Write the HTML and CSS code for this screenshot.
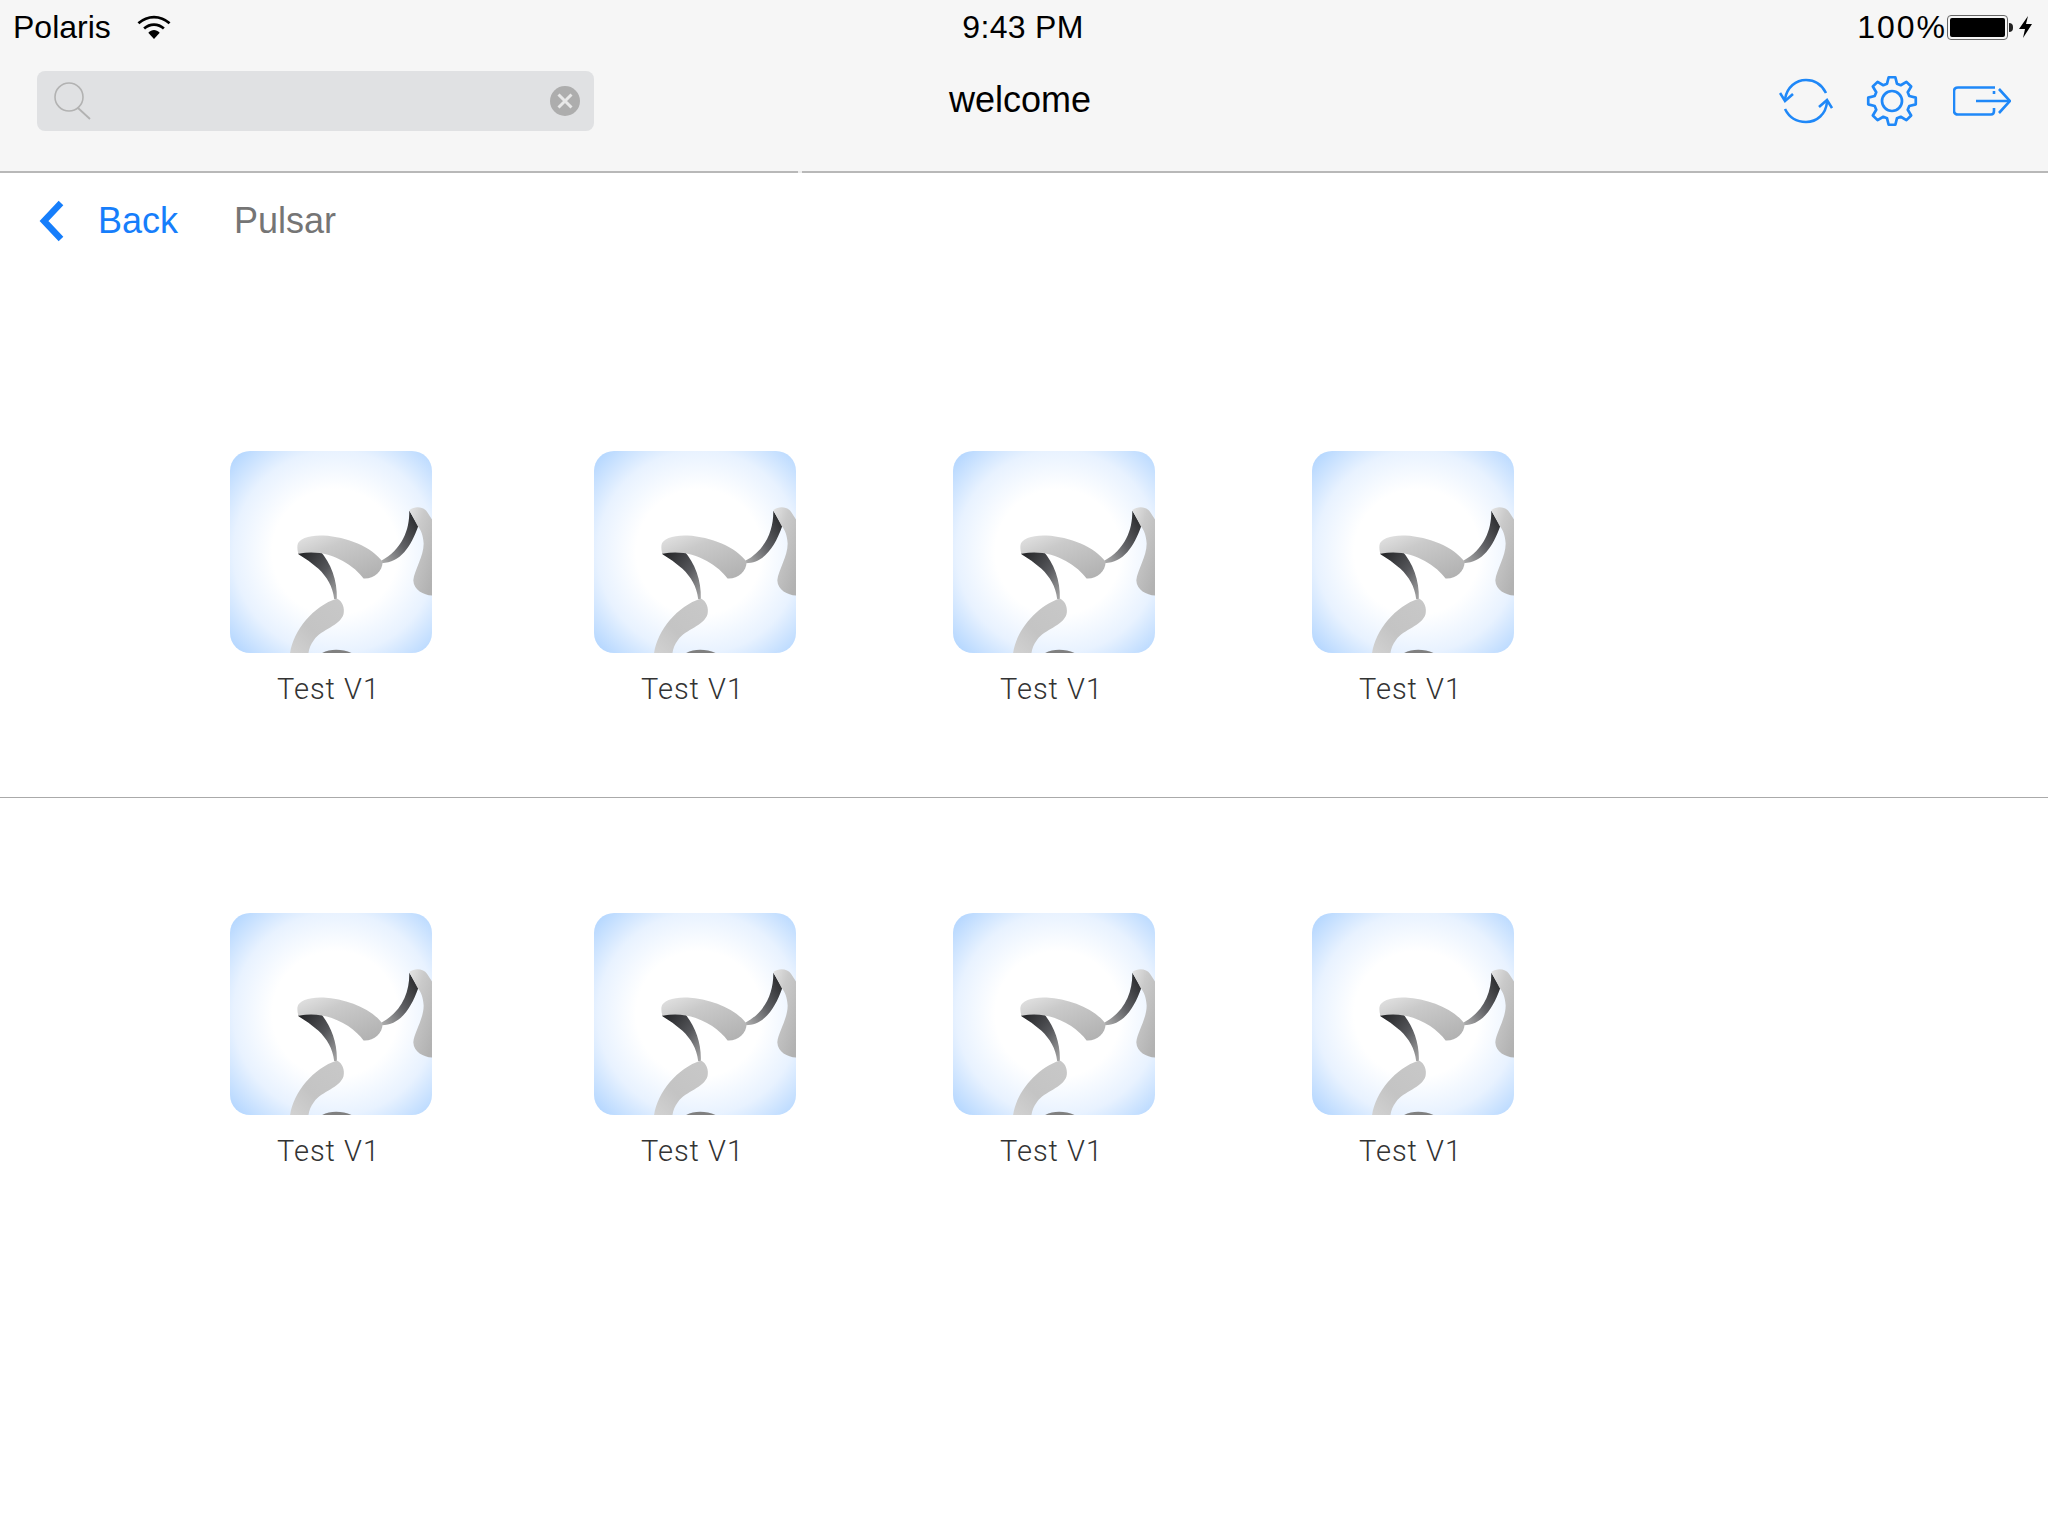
FILE: index.html
```html
<!DOCTYPE html>
<html lang="en">
<head>
    <meta charset="UTF-8">
    <meta name="viewport" content="width=device-width, initial-scale=1.0">
    <title>Pulsar</title>
    <link rel="stylesheet" href="styles.css">
</head>
<body>
    <svg class="defs" width="0" height="0">
        <defs>
            <radialGradient id="tileBg" cx="52%" cy="50%" r="74%">
                <stop offset="0" stop-color="#fff"/>
                <stop offset="0.42" stop-color="#fff"/>
                <stop offset="0.68" stop-color="#e8f2ff"/>
                <stop offset="1" stop-color="#a6cfff"/>
            </radialGradient>
            <linearGradient id="ribbonGrey" x1="0" y1="0" x2="0.8" y2="1">
                <stop offset="0" stop-color="#e4e4e4"/>
                <stop offset="0.35" stop-color="#cacaca"/>
                <stop offset="1" stop-color="#b2b2b2"/>
            </linearGradient>
            <linearGradient id="ribbonLow" x1="1" y1="0" x2="0" y2="1">
                <stop offset="0" stop-color="#c8c8c8"/>
                <stop offset="0.6" stop-color="#c4c4c4"/>
                <stop offset="1" stop-color="#d2d2d2"/>
            </linearGradient>
            <linearGradient id="ribbonDark" x1="0" y1="0" x2="1" y2="1">
                <stop offset="0" stop-color="#1f2022"/>
                <stop offset="0.55" stop-color="#55565a"/>
                <stop offset="1" stop-color="#a8a8a8"/>
            </linearGradient>
            <linearGradient id="ribbonDarkRight" x1="1" y1="0" x2="0" y2="1">
                <stop offset="0" stop-color="#1f2022"/>
                <stop offset="0.55" stop-color="#606165"/>
                <stop offset="1" stop-color="#b0b0b0"/>
            </linearGradient>
            <clipPath id="tileClip">
                <rect x="60" y="63" width="605" height="605" rx="60"/>
            </clipPath>
            <symbol id="tile" viewBox="60 63 605 605">
                <g clip-path="url(#tileClip)">
                    <rect x="60" y="63" width="605" height="605" fill="url(#tileBg)"/>
                    <path fill="url(#ribbonDark)" d="M265 368 L330 362 C362 400 382 450 380 506 L372 506 C368 470 350 440 325 416 C305 398 285 384 265 372Z"/>
                    <path fill="url(#ribbonDarkRight)" d="M597 242 C598 300 575 358 513 392 L515 399 C570 398 602 350 624 288Z"/>
                    <path fill="url(#ribbonGrey)" d="M262 345 C264 325 300 314 340 316 C410 320 485 350 517 395 C517 425 490 447 460 445 C430 402 350 352 265 371 C262 362 261 352 262 345Z"/>
                    <path fill="url(#ribbonLow)" d="M380 505 C398 513 404 535 400 552 C388 588 336 596 312 628 C301 642 297 655 295 668 L240 668 C250 600 310 528 380 505Z"/>
                    <path fill="#808080" d="M336 668 C360 655 395 655 424 668Z"/>
                    <path fill="url(#ribbonGrey)" d="M597 240 C615 226 640 230 650 245 L665 268 L665 496 C640 494 610 480 609 450 C612 420 640 380 640 340 C638 315 632 300 622 288Z"/>
                </g>
            </symbol>
        </defs>
    </svg>

    <header class="topbar">
        <div class="status">
            <div class="status-left">
                <span>Polaris</span>
                <svg class="wifi" viewBox="0 0 34 26" width="36" height="27">
                    <path d="M2 9 C11 1 23 1 32 9" fill="none" stroke="#000" stroke-width="2.6"/>
                    <path d="M7.500 14 C13 9 21 9 26.500 14" fill="none" stroke="#000" stroke-width="2.6"/>
                    <path d="M11.500 18 C15 14.500 19 14.500 22.500 18 L17 24Z" fill="#000"/>
                </svg>
            </div>
            <div class="status-time">9:43 PM</div>
            <div class="status-right">
                <span class="pct">100%</span>
                <div class="battery"><div class="battery-fill"></div></div>
                <div class="battery-tip"></div>
                <svg class="bolt" viewBox="0 0 15 22" width="15" height="22">
                    <path d="M10 0 L1 13 H7 L5 22 L14 8 H8Z" fill="#000"/>
                </svg>
            </div>
        </div>
        <div class="toolbar">
            <div class="search">
                <svg viewBox="0 0 38 38" width="38" height="38" class="glass">
                    <circle cx="16" cy="15" r="14" fill="none" stroke="#b2b2b2" stroke-width="1.6"/>
                    <path d="M25 26 L37 37" stroke="#b2b2b2" stroke-width="1.8"/>
                </svg>
                <div class="clear">
                    <svg viewBox="0 0 30 30" width="30" height="30">
                        <circle cx="15" cy="15" r="15" fill="#adadad"/>
                        <path d="M8.500 8.500 L21.500 21.500 M21.500 8.500 L8.500 21.500" stroke="#e8e8e8" stroke-width="3"/>
                    </svg>
                </div>
            </div>
            <div class="title">welcome</div>
            <div class="actions">
                <svg class="refresh" viewBox="0 0 54 46" width="54" height="46" fill="none" stroke="#1f88f8" stroke-width="2.6">
                    <path d="M6 21 C8 9 17 2 27 2 C36 2 43 7 47 15"/>
                    <path d="M1 15 L6 23 L14 16"/>
                    <path d="M48 24 C47 36 38 44 27 44 C17 44 10 39 6 31"/>
                    <path d="M40 29 L48 22 L53 30"/>
                </svg>
                <svg class="gear" viewBox="-26 -26 52 52" width="52" height="52" fill="none" stroke="#1f88f8" stroke-width="2.7" stroke-linejoin="round">
                    <polygon points="-3.34,-23.77 3.34,-23.77 4.96,-17.3 8.73,-15.74 14.44,-19.17 19.17,-14.44 15.74,-8.73 17.3,-4.96 23.77,-3.34 23.77,3.34 17.3,4.96 15.74,8.73 19.17,14.44 14.44,19.17 8.73,15.74 4.96,17.3 3.34,23.77 -3.34,23.77 -4.96,17.3 -8.73,15.74 -14.44,19.17 -19.17,14.44 -15.74,8.73 -17.3,4.96 -23.77,3.34 -23.77,-3.34 -17.3,-4.96 -15.74,-8.73 -19.17,-14.44 -14.44,-19.17 -8.73,-15.74 -4.96,-17.3"/>
                    <circle r="10"/>
                </svg>
                <svg class="logout" viewBox="0 0 58 30" width="58" height="30" fill="none" stroke="#1f88f8" stroke-width="2.6">
                    <path d="M42 1.500 H5 Q1 1.500 1 5.500 V24.500 Q1 28.500 5 28.500 H38 Q41 28.500 41 25 V22"/>
                    <path d="M41 8 V5"/>
                    <path d="M23 15 H56"/>
                    <path d="M46 3 L57 15 L46 27"/>
                </svg>
            </div>
        </div>
    </header>

    <main>
        <section class="shelf shelf-first">
            <nav class="crumbs">
                <svg class="chevron" viewBox="0 0 26 42" width="26" height="42">
                    <path d="M23 3 L6 21 L23 39" fill="none" stroke="#167efb" stroke-width="6.4"/>
                </svg>
                <a class="back">Back</a>
                <span class="crumb">Pulsar</span>
            </nav>
            <div class="grid">
                <div class="item"><svg class="tile"><use href="#tile"/></svg><div class="label">Test V1</div></div>
                <div class="item"><svg class="tile"><use href="#tile"/></svg><div class="label">Test V1</div></div>
                <div class="item"><svg class="tile"><use href="#tile"/></svg><div class="label">Test V1</div></div>
                <div class="item"><svg class="tile"><use href="#tile"/></svg><div class="label">Test V1</div></div>
            </div>
        </section>
        <section class="shelf">
            <div class="grid">
                <div class="item"><svg class="tile"><use href="#tile"/></svg><div class="label">Test V1</div></div>
                <div class="item"><svg class="tile"><use href="#tile"/></svg><div class="label">Test V1</div></div>
                <div class="item"><svg class="tile"><use href="#tile"/></svg><div class="label">Test V1</div></div>
                <div class="item"><svg class="tile"><use href="#tile"/></svg><div class="label">Test V1</div></div>
            </div>
        </section>
    </main>
</body>
</html>
```

FILE: styles.css
```css
body, html {
    margin: 0;
    padding: 0;
    width: 100%;
    height: 100%;
    overflow: hidden;
    font-family: "Liberation Sans", Arial, sans-serif;
    background-color: #fff;
    color: #000;
}
.defs {
    display: block;
    height: 0;
}
.topbar {
    position: relative;
    height: 171px;
    background-color: #f6f6f6;
    border-bottom: 2px solid #b8b8b8;
}
/* small notch in the header rule */
.topbar::after {
    content: "";
    position: absolute;
    left: 798px;
    bottom: -2px;
    width: 4px;
    height: 2px;
    background-color: #eee;
}
.status {
    display: grid;
    grid-template-columns: 1fr auto 1fr;
    align-items: center;
    height: 54px;
    padding: 0 15px 0 13px;
    font-size: 32px;
}
.status-left {
    display: flex;
    align-items: center;
    gap: 25px;
}
.status-time {
    letter-spacing: 0.3px;
}
.status-right {
    display: flex;
    align-items: center;
    justify-content: flex-end;
}
.pct {
    letter-spacing: 2px;
}
.battery {
    width: 61px;
    height: 25px;
    box-sizing: border-box;
    border: 1px solid #666;
    border-radius: 4px;
    padding: 2px;
}
.battery-fill {
    height: 100%;
    background-color: #000;
    border-radius: 2px;
}
.battery-tip {
    width: 4px;
    height: 9px;
    background-color: #222;
    border-radius: 0 4px 4px 0;
    margin-left: 1px;
}
.bolt {
    margin-left: 5px;
}
.toolbar {
    display: grid;
    grid-template-columns: 1fr auto 1fr;
    align-items: center;
    height: 60px;
    margin-top: 17px;
    padding: 0 37px;
}
.search {
    display: flex;
    align-items: center;
    justify-content: space-between;
    width: 557px;
    height: 60px;
    box-sizing: border-box;
    padding: 0 14px 0 16px;
    background-color: #e0e1e3;
    border-radius: 8px;
}
.clear {
    display: flex;
}
.title {
    font-size: 36px;
    line-height: 58px;
    margin-bottom: 2px;
    margin-right: 8px;
}
.actions {
    display: flex;
    align-items: center;
    justify-content: flex-end;
    gap: 33px;
}
.gear {
    margin-right: 2px;
}
.crumbs {
    display: flex;
    align-items: center;
    height: 96px;
    padding-left: 38px;
    font-size: 36px;
}
.back {
    color: #167efb;
    margin-left: 34px;
}
.crumb {
    color: #757575;
    margin-left: 56px;
}
.shelf {
    height: 625px;
    box-sizing: border-box;
    border-bottom: 1px solid #aaa;
    padding-top: 115px;
}
.shelf-first {
    padding-top: 0;
}
.shelf-first .grid {
    margin-top: 182px;
}
.shelf:last-child {
    border-bottom: none;
}
.grid {
    display: grid;
    grid-template-columns: 364px 359px 359px 202px;
    padding-left: 230px;
}
.tile {
    display: block;
    width: 202px;
    height: 202px;
}
.label {
    width: 202px;
    padding-right: 5px;
    box-sizing: border-box;
    margin-top: 19px;
    text-align: center;
    font-family: Roboto, "Liberation Sans", sans-serif;
    font-weight: 300;
    font-size: 29px;
    letter-spacing: 1px;
    color: #333;
}
```
